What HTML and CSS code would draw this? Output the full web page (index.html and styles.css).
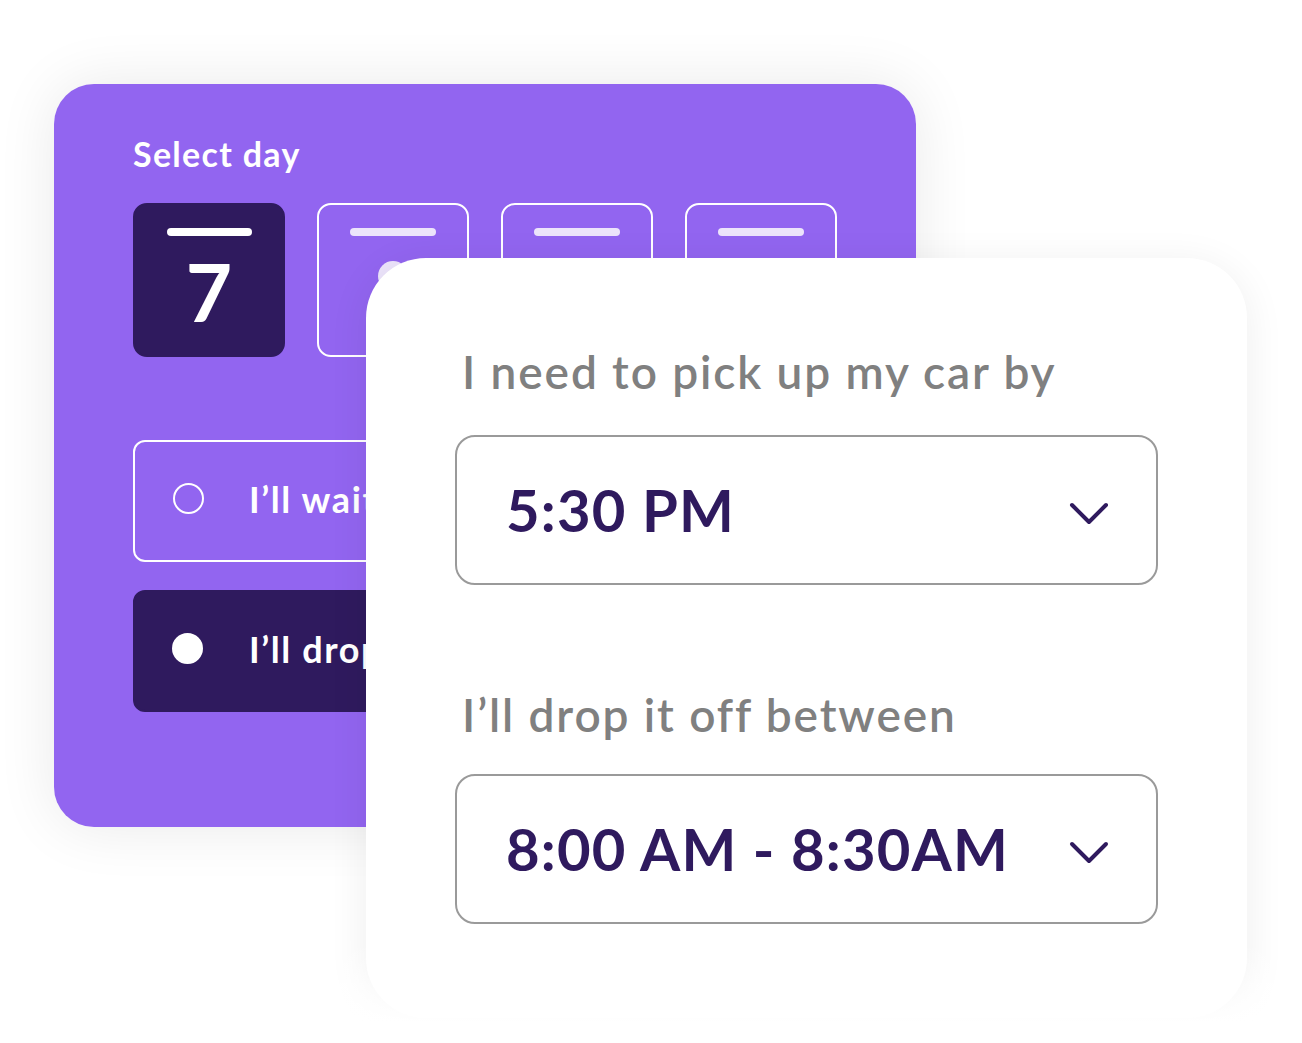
FILE: index.html
```html
<!DOCTYPE html>
<html lang="en">
<head>
    <meta charset="UTF-8">
    <meta name="viewport" content="width=device-width, initial-scale=1.0">
    <title>Book a service</title>
    <link rel="stylesheet" href="styles.css">
</head>
<body>
    <div class="stage">
        <!-- Day picker card -->
        <div class="day-card">
            <h2 class="day-title">Select day</h2>

            <div class="day-list">
                <div class="day-tile selected">
                    <span class="day-bar"></span>
                    <span class="day-num">7</span>
                </div>
                <div class="day-tile">
                    <span class="day-bar"></span>
                    <span class="day-dot"></span>
                </div>
                <div class="day-tile">
                    <span class="day-bar"></span>
                    <span class="day-dot"></span>
                </div>
                <div class="day-tile">
                    <span class="day-bar"></span>
                    <span class="day-dot"></span>
                </div>
            </div>

            <div class="option">
                <span class="radio"></span>
                <span class="option-text">I’ll wait at the shop</span>
            </div>
            <div class="option selected">
                <span class="radio"></span>
                <span class="option-text">I’ll drop it off</span>
            </div>
        </div>

        <!-- Time picker card -->
        <div class="time-card">
            <label class="time-label first">I need to pick up my car by</label>
            <div class="time-select first">
                <span class="time-value">5:30 PM</span>
                <svg class="chevron" width="40" height="26" viewBox="0 0 40 26">
                    <path d="M3 4 L20 21 L37 4" fill="none" stroke="#2f1a5e" stroke-width="4" stroke-linecap="round" stroke-linejoin="round"/>
                </svg>
            </div>

            <label class="time-label second">I’ll drop it off between</label>
            <div class="time-select second">
                <span class="time-value">8:00 AM - 8:30AM</span>
                <svg class="chevron" width="40" height="26" viewBox="0 0 40 26">
                    <path d="M3 4 L20 21 L37 4" fill="none" stroke="#2f1a5e" stroke-width="4" stroke-linecap="round" stroke-linejoin="round"/>
                </svg>
            </div>
        </div>

        <!-- soft fade at the bottom edge -->
        <div class="fade"></div>
    </div>
</body>
</html>
```

FILE: styles.css
```css
/* Global styles */
body {
    margin: 0;
    padding: 0;
    background-color: #ffffff;
    font-family: Lato, 'Open Sans', sans-serif;
}

.stage {
    position: relative;
    width: 1302px;
    height: 1043px;
    overflow: hidden;
    padding-top: 84px;
    box-sizing: border-box;
}

/* Purple day card */
.day-card {
    margin-left: 54px;
    width: 862px;
    height: 743px;
    box-sizing: border-box;
    padding: 53px 0 0 79px;
    background-color: #9265f0;
    border-radius: 40px;
    box-shadow: 0 0 60px rgba(0, 0, 0, 0.09);
}

.day-title {
    margin: 0;
    font-size: 34px;
    line-height: 1;
    font-weight: 700;
    letter-spacing: 1.3px;
    color: #ffffff;
}

.day-list {
    display: flex;
    gap: 32px;
    margin-top: 32px;
}

.day-tile {
    width: 152px;
    height: 154px;
    box-sizing: border-box;
    border: 2px solid #ffffff;
    border-radius: 14px;
    display: flex;
    flex-direction: column;
    align-items: center;
    padding-top: 23px;
}

.day-tile.selected {
    background-color: #2f1a5e;
    border-color: #2f1a5e;
}

.day-bar {
    width: 86px;
    height: 8px;
    border-radius: 4px;
    background-color: #ece4fb;
}

.day-tile.selected .day-bar {
    width: 85px;
    background-color: #ffffff;
}

.day-num {
    margin-top: 15px;
    font-size: 80px;
    line-height: 1;
    font-weight: 700;
    color: #ffffff;
}

.day-dot {
    width: 30px;
    height: 30px;
    margin-top: 25px;
    border-radius: 50%;
    background-color: #ece4fb;
}

/* Radio options */
.option {
    width: 704px;
    height: 122px;
    box-sizing: border-box;
    margin-top: 83px;
    border: 2px solid #ffffff;
    border-radius: 12px;
    display: flex;
    align-items: center;
    padding: 0 0 5px 38px;
}

.option + .option {
    margin-top: 28px;
}

.option.selected {
    background-color: #2f1a5e;
    border-color: #2f1a5e;
    padding-left: 37px;
}

.radio {
    width: 31px;
    height: 31px;
    box-sizing: border-box;
    border: 2px solid #ffffff;
    border-radius: 50%;
}

.option.selected .radio {
    background-color: #ffffff;
}

.option-text {
    margin-left: 45px;
    font-size: 36px;
    font-weight: 700;
    letter-spacing: 1.6px;
    color: #ffffff;
}

.option.selected .option-text {
    margin-left: 46px;
}

/* White time card */
.time-card {
    position: absolute;
    left: 366px;
    top: 258px;
    width: 881px;
    height: 760px;
    box-sizing: border-box;
    padding: 91px 89px 0 89px;
    background-color: #ffffff;
    border-radius: 60px;
    box-shadow: 0 6px 40px rgba(0, 0, 0, 0.07);
}

.time-label {
    display: block;
    margin-left: 7px;
    font-size: 46px;
    line-height: 1;
    font-weight: 600;
    letter-spacing: 1.9px;
    color: #808080;
}

.time-label.second {
    margin-top: 107px;
}

.time-select {
    height: 150px;
    box-sizing: border-box;
    border: 2px solid #9a9a9a;
    border-radius: 20px;
    display: flex;
    align-items: center;
    justify-content: space-between;
    padding: 0 47px 0 49px;
}

.time-select.first {
    margin-top: 40px;
}

.time-select.second {
    margin-top: 36px;
}

.time-value {
    font-size: 58px;
    line-height: 1;
    font-weight: 700;
    letter-spacing: 1.2px;
    color: #2f1a5e;
}

.chevron {
    display: block;
    margin-top: 8px;
}

/* Fade over the card's bottom edge */
.fade {
    position: absolute;
    left: 0;
    right: 0;
    bottom: 0;
    height: 100px;
    background: linear-gradient(to bottom, rgba(255, 255, 255, 0), #ffffff 80%);
}
```
